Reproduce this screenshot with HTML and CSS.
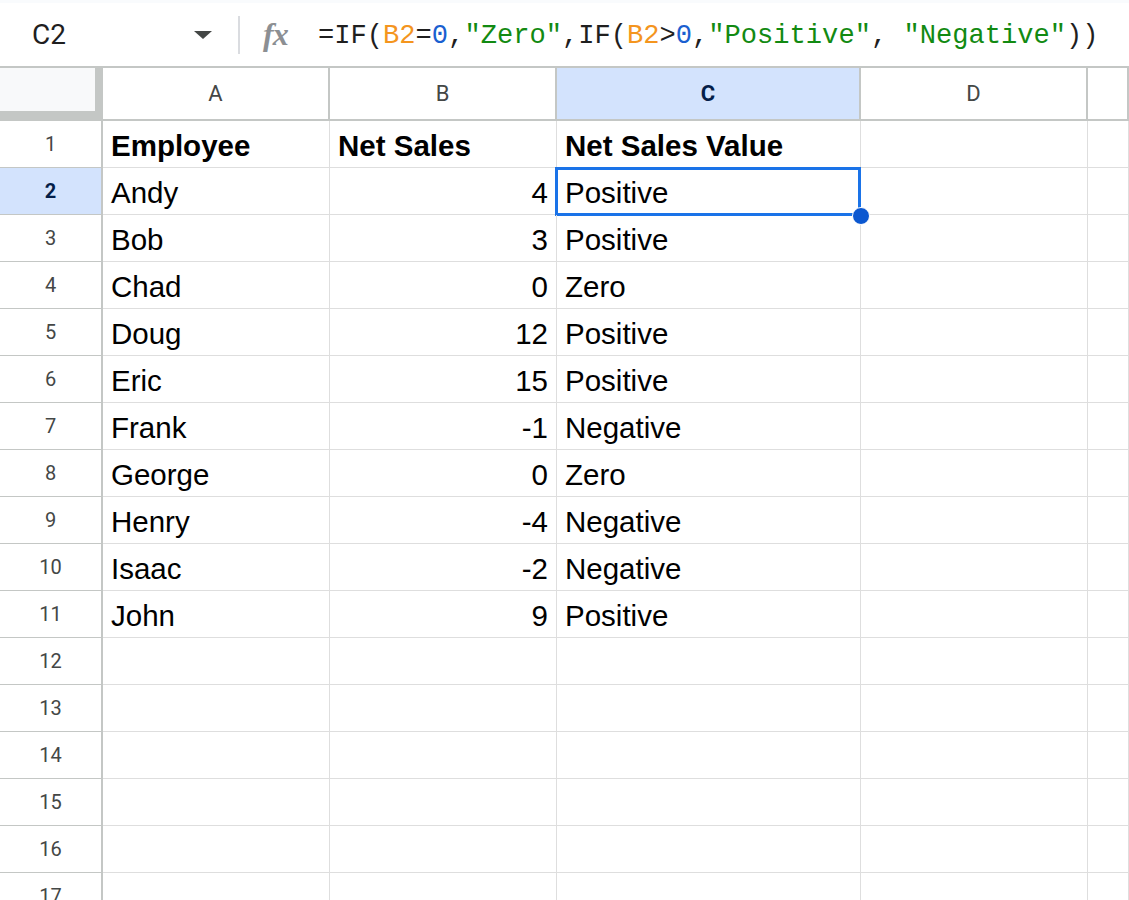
FILE: index.html
```html
<!DOCTYPE html>
<html lang="en">
<head>
    <meta charset="UTF-8">
    <meta name="viewport" content="width=device-width, initial-scale=1.0">
    <title>Net Sales - Sheet1</title>
    <link rel="stylesheet" href="styles.css">
</head>
<body>
    <div class="formula-bar">
        <div class="name-box">
            <span class="cell-ref">C2</span>
            <span class="caret"></span>
        </div>
        <div class="divider"></div>
        <span class="fx">fx</span>
        <div class="formula">=IF(<span class="ref">B2</span>=<span class="num">0</span>,<span class="str">"Zero"</span>,IF(<span class="ref">B2</span>&gt;<span class="num">0</span>,<span class="str">"Positive"</span>, <span class="str">"Negative"</span>))</div>
    </div>

    <div class="sheet">
        <div class="row col-heads">
            <div class="corner"><div class="corner-inner"></div></div>
            <div class="col-head">A</div>
            <div class="col-head">B</div>
            <div class="col-head selected">C</div>
            <div class="col-head">D</div>
            <div class="col-head"></div>
        </div>

        <div class="row">
            <div class="row-head">1</div>
            <div class="cell bold">Employee</div>
            <div class="cell bold">Net Sales</div>
            <div class="cell bold">Net Sales Value</div>
            <div class="cell"></div>
            <div class="cell"></div>
        </div>
        <div class="row">
            <div class="row-head selected">2</div>
            <div class="cell">Andy</div>
            <div class="cell num">4</div>
            <div class="cell active">Positive<span class="handle"></span></div>
            <div class="cell"></div>
            <div class="cell"></div>
        </div>
        <div class="row">
            <div class="row-head">3</div>
            <div class="cell">Bob</div>
            <div class="cell num">3</div>
            <div class="cell">Positive</div>
            <div class="cell"></div>
            <div class="cell"></div>
        </div>
        <div class="row">
            <div class="row-head">4</div>
            <div class="cell">Chad</div>
            <div class="cell num">0</div>
            <div class="cell">Zero</div>
            <div class="cell"></div>
            <div class="cell"></div>
        </div>
        <div class="row">
            <div class="row-head">5</div>
            <div class="cell">Doug</div>
            <div class="cell num">12</div>
            <div class="cell">Positive</div>
            <div class="cell"></div>
            <div class="cell"></div>
        </div>
        <div class="row">
            <div class="row-head">6</div>
            <div class="cell">Eric</div>
            <div class="cell num">15</div>
            <div class="cell">Positive</div>
            <div class="cell"></div>
            <div class="cell"></div>
        </div>
        <div class="row">
            <div class="row-head">7</div>
            <div class="cell">Frank</div>
            <div class="cell num">-1</div>
            <div class="cell">Negative</div>
            <div class="cell"></div>
            <div class="cell"></div>
        </div>
        <div class="row">
            <div class="row-head">8</div>
            <div class="cell">George</div>
            <div class="cell num">0</div>
            <div class="cell">Zero</div>
            <div class="cell"></div>
            <div class="cell"></div>
        </div>
        <div class="row">
            <div class="row-head">9</div>
            <div class="cell">Henry</div>
            <div class="cell num">-4</div>
            <div class="cell">Negative</div>
            <div class="cell"></div>
            <div class="cell"></div>
        </div>
        <div class="row">
            <div class="row-head">10</div>
            <div class="cell">Isaac</div>
            <div class="cell num">-2</div>
            <div class="cell">Negative</div>
            <div class="cell"></div>
            <div class="cell"></div>
        </div>
        <div class="row">
            <div class="row-head">11</div>
            <div class="cell">John</div>
            <div class="cell num">9</div>
            <div class="cell">Positive</div>
            <div class="cell"></div>
            <div class="cell"></div>
        </div>
        <div class="row">
            <div class="row-head">12</div>
            <div class="cell"></div>
            <div class="cell"></div>
            <div class="cell"></div>
            <div class="cell"></div>
            <div class="cell"></div>
        </div>
        <div class="row">
            <div class="row-head">13</div>
            <div class="cell"></div>
            <div class="cell"></div>
            <div class="cell"></div>
            <div class="cell"></div>
            <div class="cell"></div>
        </div>
        <div class="row">
            <div class="row-head">14</div>
            <div class="cell"></div>
            <div class="cell"></div>
            <div class="cell"></div>
            <div class="cell"></div>
            <div class="cell"></div>
        </div>
        <div class="row">
            <div class="row-head">15</div>
            <div class="cell"></div>
            <div class="cell"></div>
            <div class="cell"></div>
            <div class="cell"></div>
            <div class="cell"></div>
        </div>
        <div class="row">
            <div class="row-head">16</div>
            <div class="cell"></div>
            <div class="cell"></div>
            <div class="cell"></div>
            <div class="cell"></div>
            <div class="cell"></div>
        </div>
        <div class="row">
            <div class="row-head">17</div>
            <div class="cell"></div>
            <div class="cell"></div>
            <div class="cell"></div>
            <div class="cell"></div>
            <div class="cell"></div>
        </div>
    </div>
</body>
</html>
```

FILE: styles.css
```css
html, body {
    margin: 0;
    height: 100%;
    overflow: hidden;
    background: #fff;
}
body {
    font-family: "Liberation Sans", Arial, sans-serif;
    color: #000;
}

/* formula bar */
.formula-bar {
    display: flex;
    align-items: center;
    height: 63px;
    border-top: 3px solid #f9fbfd;
}
.name-box {
    display: flex;
    align-items: center;
    width: 238px;
    padding-left: 32px;
    box-sizing: border-box;
}
.cell-ref {
    font-family: Roboto, "Liberation Sans", sans-serif;
    font-size: 28px;
    color: #1f1f1f;
}
.caret {
    margin-left: auto;
    margin-right: 26px;
    width: 0;
    height: 0;
    border-left: 9.5px solid transparent;
    border-right: 9.5px solid transparent;
    border-top: 8px solid #444746;
}
.divider {
    width: 2px;
    height: 38px;
    background: #dadce0;
}
.fx {
    display: inline-block;
    width: 31px;
    margin-left: 23px;
    font-family: "Liberation Serif", serif;
    font-style: italic;
    font-weight: bold;
    font-size: 32px;
    letter-spacing: -1px;
    color: #8c8f93;
}
.formula {
    margin-left: 24px;
    padding-top: 2px;
    font-family: "Liberation Mono", "DejaVu Sans Mono", monospace;
    font-size: 27.1px;
    color: #1f1f1f;
    white-space: pre;
}
.formula .ref { color: #f4951e; }
.formula .num { color: #1a5fd0; }
.formula .str { color: #128a12; }

/* grid */
.sheet {
    border-top: 2px solid #c4c7c5;
}
.row {
    display: grid;
    grid-template-columns: 103px 227px 227px 304px 227px 1fr;
    height: 47px;
}
.col-heads {
    height: 53px;
}
.corner {
    background: #c4c7c5;
}
.corner-inner {
    width: 95px;
    height: 43px;
    background: #f8f9fa;
}
.col-head {
    display: flex;
    align-items: center;
    justify-content: center;
    border-right: 2px solid #c4c7c5;
    border-bottom: 2px solid #c4c7c5;
    font-family: Roboto, "Liberation Sans", sans-serif;
    font-size: 22px;
    color: #444746;
}
.col-head.selected {
    background: #d3e3fd;
    color: #041e49;
    font-weight: bold;
}
.row-head {
    display: flex;
    align-items: center;
    justify-content: center;
    border-right: 2px solid #c4c7c5;
    border-bottom: 1px solid #c4c7c5;
    font-family: Roboto, "Liberation Sans", sans-serif;
    font-size: 20px;
    color: #444746;
}
.row-head.selected {
    background: #d3e3fd;
    color: #041e49;
    font-weight: bold;
}
.cell {
    position: relative;
    display: flex;
    align-items: center;
    padding: 3px 8px 0 8px;
    border-right: 1px solid #dedede;
    border-bottom: 1px solid #dedede;
    font-size: 29.5px;
    white-space: nowrap;
}
.cell.bold {
    font-weight: bold;
}
.cell.num {
    justify-content: flex-end;
}
.cell.active::after {
    content: "";
    position: absolute;
    top: -1px;
    left: -2px;
    right: -1px;
    bottom: -2px;
    border: 3px solid #1a73e8;
}
.handle {
    position: absolute;
    right: -10px;
    bottom: -11px;
    width: 16px;
    height: 16px;
    border: 1px solid #fff;
    border-radius: 50%;
    background: #0b57d0;
    z-index: 2;
}
```
